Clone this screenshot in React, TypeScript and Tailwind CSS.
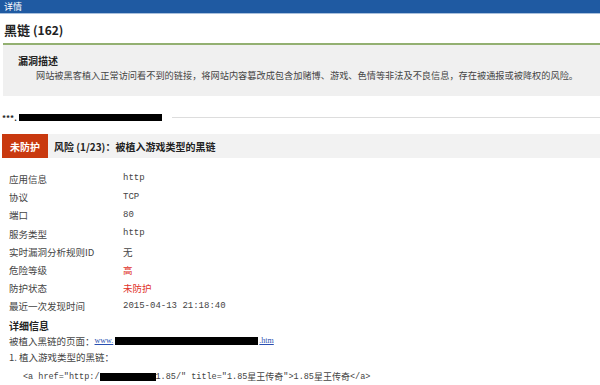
import React from "react";

const F = { fontFamily: '"Noto Sans CJK SC", "Noto Sans", sans-serif' };
const M = { fontFamily: '"Liberation Mono", monospace', fontSize: "8.5px" };

const rows: { k: string; v: string; red?: boolean; mono?: boolean }[] = [
  { k: "应用信息", v: "http", mono: true },
  { k: "协议", v: "TCP", mono: true },
  { k: "端口", v: "80", mono: true },
  { k: "服务类型", v: "http", mono: true },
  { k: "实时漏洞分析规则ID", v: "无" },
  { k: "危险等级", v: "高", red: true },
  { k: "防护状态", v: "未防护", red: true },
  { k: "最近一次发现时间", v: "2015-04-13 21:18:40", mono: true },
];

export default function App() {
  return (
    <div className="w-[600px] h-[385px] overflow-hidden bg-white text-[#333]" style={F}>
      <div className="h-[14px] bg-[#1f5aa2] text-white text-[9px] leading-[14px] pl-[4px] border-b border-[#a9c0dc]">详情</div>
      <div className="h-[29px] pl-[4px] flex items-center text-[13px] font-bold text-[#222] pt-[2px]">
        黑链<span className="text-[12px] ml-[3px]">(162)</span>
      </div>
      <div className="ml-[3px] border-t-2 border-[#93b071] bg-[#f0f0f0] h-[53px] pt-[9px]">
        <div className="pl-[15px] text-[10px] font-bold text-[#222] leading-[14px]">漏洞描述</div>
        <div className="pl-[33px] text-[9.2px] leading-[14px] text-[#444] whitespace-nowrap">
          网站被黑客植入正常访问看不到的链接，将网站内容篡改成包含加赌博、游戏、色情等非法及不良信息，存在被通报或被降权的风险。
        </div>
      </div>
      <div className="h-[38px] flex items-center pl-[2px] pt-[5px]">
        <span className="text-[8px] font-bold text-[#222]">***.</span>
        <span className="w-[143px] h-[7px] bg-black ml-[2px]"></span>
        <span className="flex-1 border-t border-[#ddd] ml-[10px]"></span>
      </div>
      <div className="h-[24px] flex items-center bg-[#f2f2f2] ml-[2px]">
        <div className="w-[46px] h-full bg-[#c9390f] text-white text-[10px] font-bold flex items-center justify-center">未防护</div>
        <div className="ml-[6px] text-[10px] font-bold text-[#222]">风险 (1/23)：被植入游戏类型的黑链</div>
      </div>
      <div className="pt-[12px] pl-[9px]">
        {rows.map((r) => (
          <div key={r.k} className="h-[18.2px] flex items-center text-[9.5px]">
            <span className="w-[114px] text-[#444]">{r.k}</span>
            <span
              className={r.red ? "text-[#e0322a]" : "text-[#444]"}
              style={r.mono ? { fontFamily: '"Liberation Mono", monospace', fontSize: "9px" } : undefined}
            >
              {r.v}
            </span>
          </div>
        ))}
        <div className="h-[17px] flex items-center text-[10px] font-bold text-[#222] mt-[1px]">详细信息</div>
        <div className="h-[15px] flex items-center text-[9.5px] text-[#444]">
          <span>被植入黑链的页面：</span>
          <span className="text-[#2a4fb0] underline text-[8px]" style={{ fontFamily: '"Liberation Serif", serif' }}>www.</span>
          <span className="w-[143px] h-[8px] bg-black ml-[2px]"></span>
          <span className="text-[#2a4fb0] underline text-[8px] ml-[1px]" style={{ fontFamily: '"Liberation Serif", serif' }}>.htm</span>
        </div>
        <div className="h-[17px] flex items-center text-[9.5px] text-[#444]">1. 植入游戏类型的黑链：</div>
        <div className="h-[21px] flex items-center text-[9px] text-[#444] pl-[14px] pt-[2px]">
          <span style={M}>{'<a href="http:/'}</span>
          <span className="w-[56px] h-[8px] bg-black"></span>
          <span style={M}>{'1.85/" title="1.85'}</span>
          <span>星王传奇</span>
          <span style={M}>{'">1.85'}</span>
          <span>星王传奇</span>
          <span style={M}>{'</a>'}</span>
        </div>
      </div>
    </div>
  );
}
